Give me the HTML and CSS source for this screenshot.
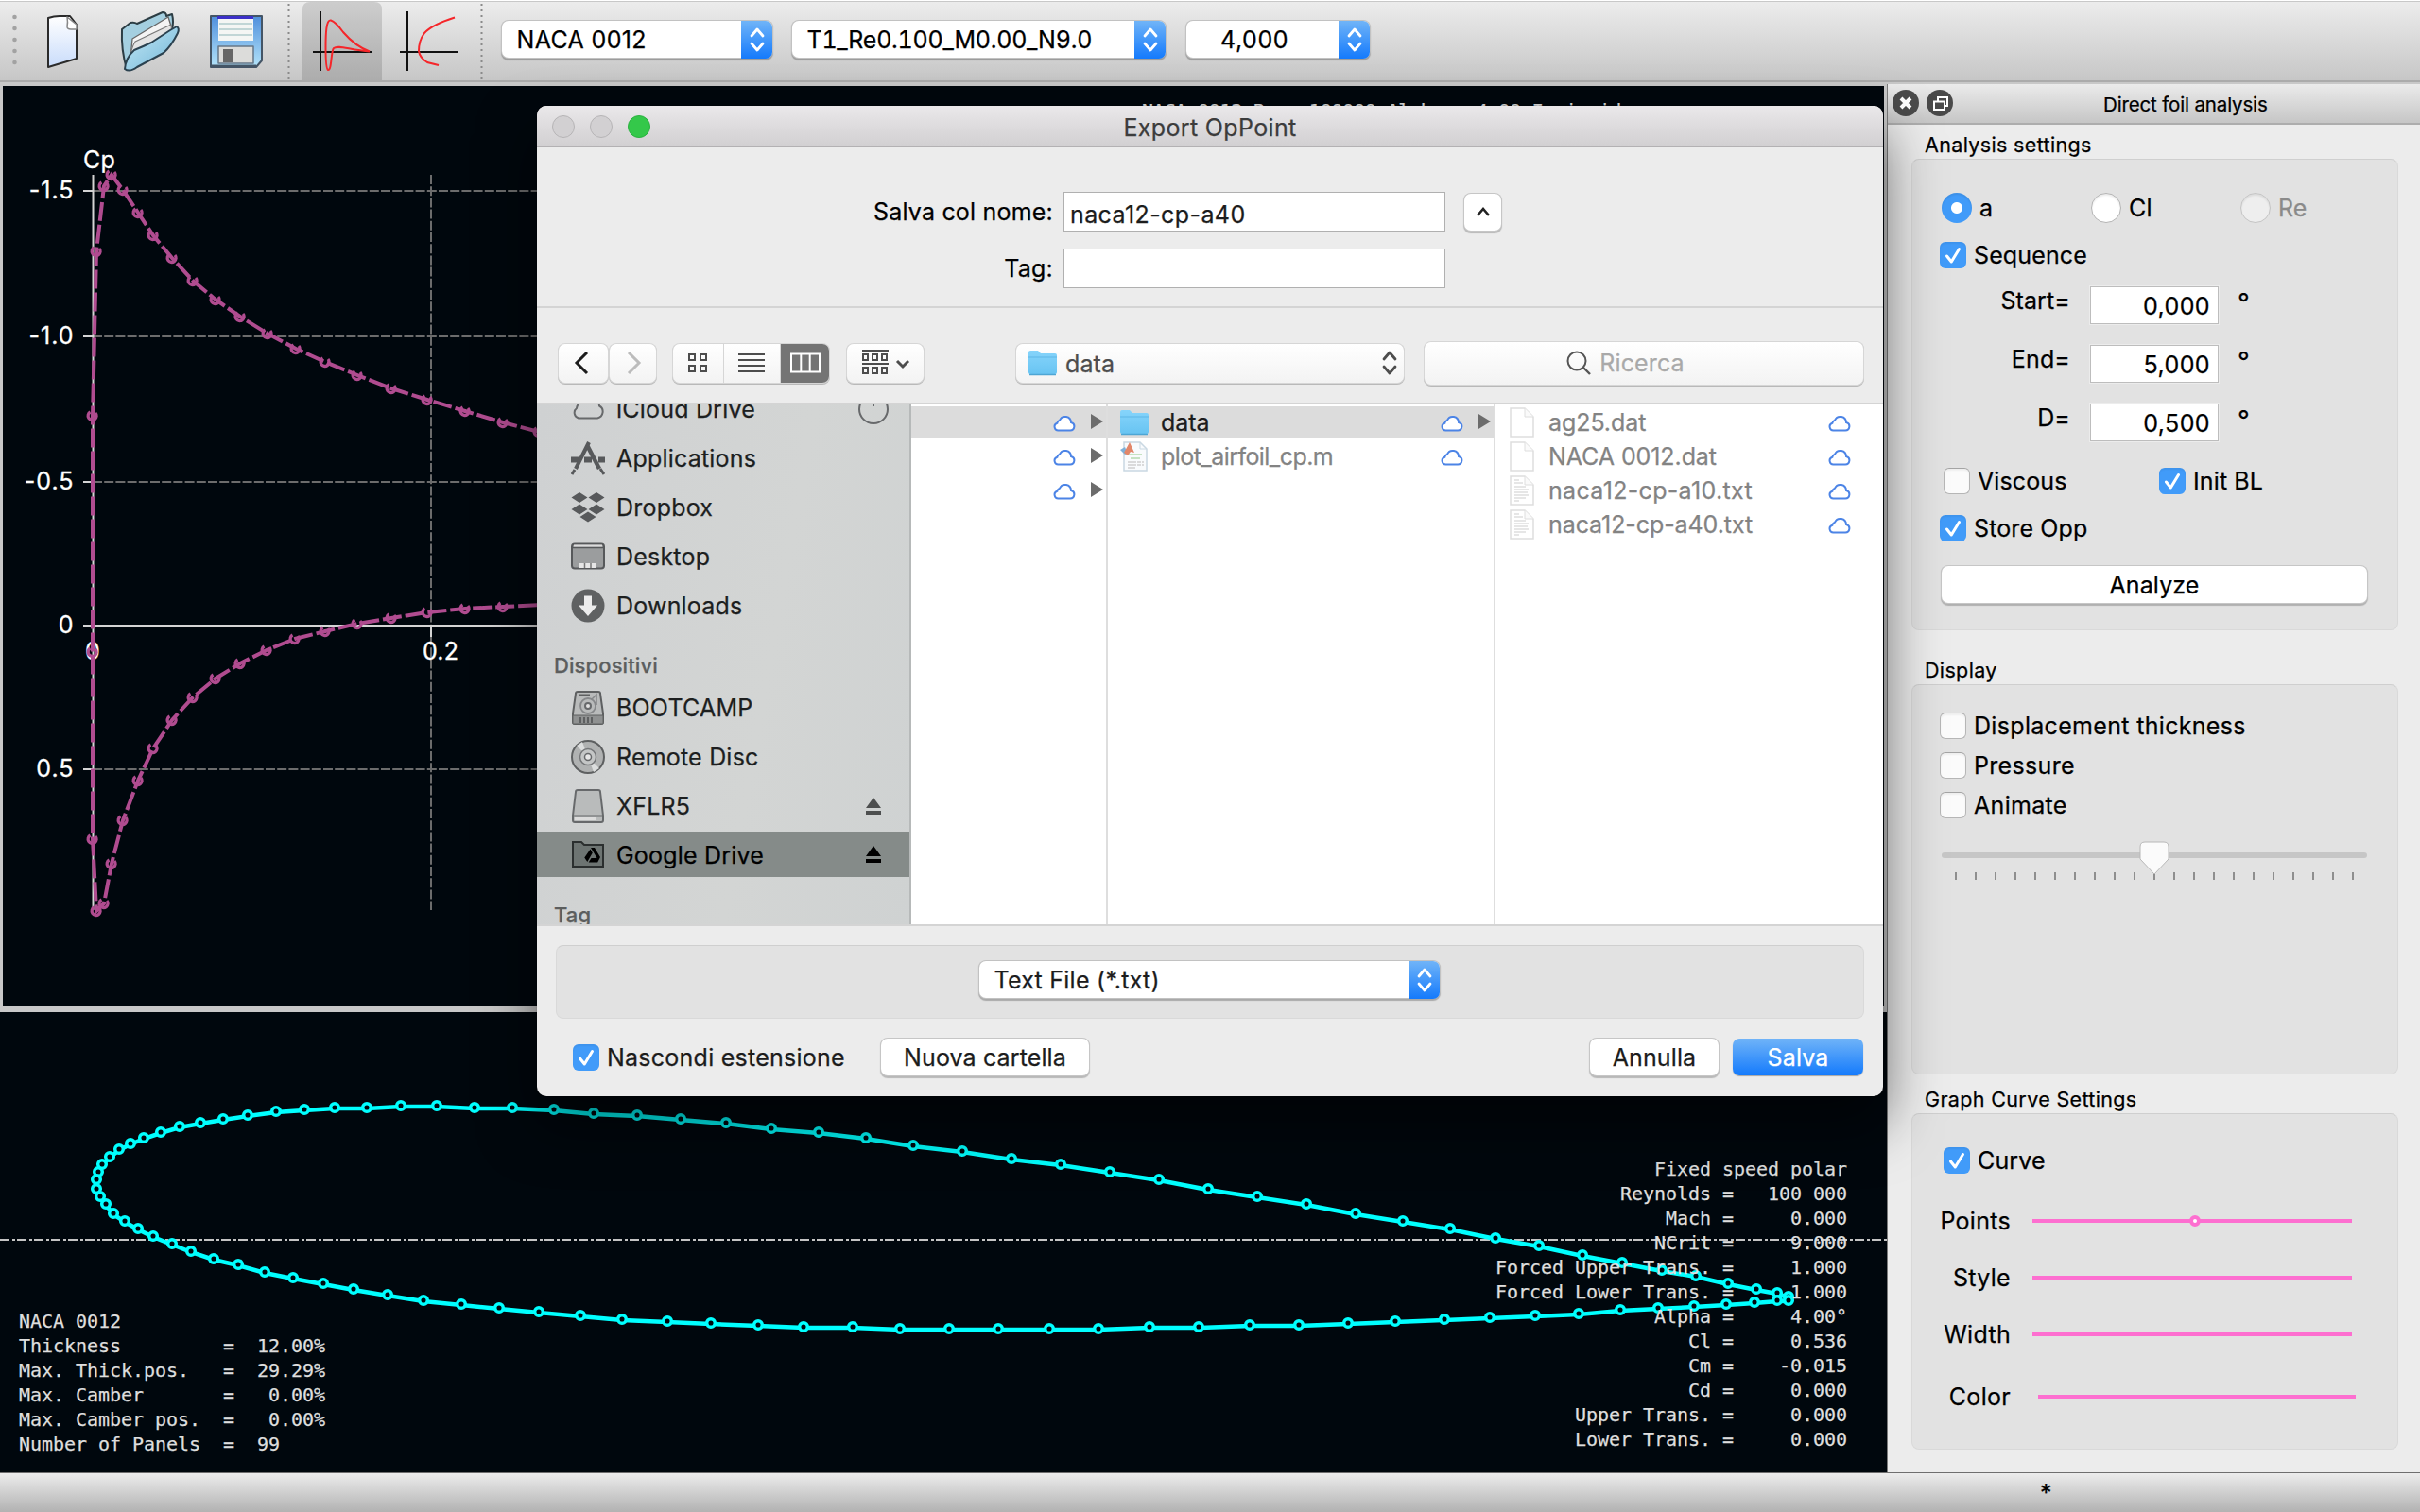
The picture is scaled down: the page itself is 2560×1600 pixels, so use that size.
FILE: index.html
```html
<!DOCTYPE html>
<html lang="it">
<head>
<meta charset="utf-8">
<title>Direct foil analysis</title>
<link rel="stylesheet" href="styles.css">
</head>
<body>
<svg class="defs" width="0" height="0">
  <defs>
    <linearGradient id="paper" x1="0" y1="0" x2="0" y2="1"><stop offset="0" stop-color="#fff"/><stop offset="1" stop-color="#c9dcfb"/></linearGradient>
    <linearGradient id="folderg" x1="0" y1="0" x2="0" y2="1"><stop offset="0" stop-color="#86d4fb"/><stop offset="1" stop-color="#68c4f2"/></linearGradient>
    <linearGradient id="teal" x1="0" y1="0" x2="1" y2="1"><stop offset="0" stop-color="#c6eaf6"/><stop offset="1" stop-color="#72b6d8"/></linearGradient>
    <linearGradient id="disk" x1="0" y1="0" x2="0" y2="1"><stop offset="0" stop-color="#4f8fdc"/><stop offset="1" stop-color="#b4e4fa"/></linearGradient>
    <symbol id="cloud" viewBox="0 0 24 20"><path d="M6 18.500h12a4.300 4.300 0 0 0 1-8.500A6.300 6.300 0 0 0 7 7.600a4 4 0 0 0-2.600 3.100A4 4 0 0 0 6 18.500z" fill="#fff" stroke="#4c84e6" stroke-width="2"/></symbol>
    <symbol id="folder" viewBox="0 0 32 28"><path d="M1 3q0-2 2-2h8l3 3h15q2 0 2 2v18q0 2-2 2H3q-2 0-2-2z" fill="url(#folderg)"/><path d="M1 8h30" stroke="#5fb7e6" stroke-width="1"/><path d="M2 26.500h28" stroke="#4ea6d4" stroke-width="1.500"/></symbol>
    <symbol id="doc" viewBox="0 0 26 32"><path d="M1 1h15l9 9v21H1z" fill="#fff" stroke="#dedede" stroke-width="1.500"/><path d="M16 1v9h9" fill="#fafafa" stroke="#dedede"/></symbol>
    <symbol id="txt" viewBox="0 0 26 32"><use href="#doc"/><path d="M5 5h5M5 8h9M5 12h12M5 15h15M5 18h14M5 21h15M5 24h12M5 27h5" stroke="#dedede" stroke-width="1.300"/></symbol>
    <symbol id="tick" viewBox="0 0 28 28"><path d="M7.500 15l4.800 6L20.500 7.500" fill="none" stroke="#fff" stroke-width="3" stroke-linecap="round" stroke-linejoin="round"/></symbol>
    <symbol id="updown" viewBox="0 0 20 28"><path d="M4 10l6-7 6 7M4 18l6 7 6-7" fill="none" stroke="currentColor" stroke-width="2.800" stroke-linecap="round" stroke-linejoin="round"/></symbol>
    <symbol id="eject" viewBox="0 0 18 20"><path d="M9 1l8 11H1zM1 15h16v4H1z" fill="currentColor"/></symbol>
  </defs>
</svg>

<header class="toolbar">
  <svg class="tools" width="530" height="86" viewBox="0 0 530 86">
    <g fill="#a2a2a2"><circle cx="15.500" cy="18" r="2.300"/><circle cx="15.500" cy="30" r="2.300"/><circle cx="15.500" cy="42" r="2.300"/><circle cx="15.500" cy="54" r="2.300"/><circle cx="15.500" cy="66" r="2.300"/></g>
    <g stroke-linejoin="round">
      <path d="M51 19q6-2 12-2h11l7 9v36L51 71z" fill="url(#paper)" stroke="#2a2a2a" stroke-width="2"/>
      <path d="M71 18q1 6 0 10 0 3 4 3h6v-5z" fill="#fff" stroke="#888" stroke-width="1.500"/>
      <path d="M129 31l9-7q4-1 7 1l27-12q4 0 4 4l6-2q2 8 0 16L140 73h-6q-6-20-5-42z" fill="#a4cfe0" stroke="#2c3d44" stroke-width="2"/>
      <path d="M140 41l38-23 5 16-46 38z" fill="#f4f4f4" stroke="#666" stroke-width="1.300"/>
      <path d="M137 64q2-14 6-20l38-18 1 10-44 32z" fill="#e4e4e4" stroke="#777" stroke-width="1.200"/>
      <path d="M132 73q1-12 10-20 10-4 18-8l20-13 7-4q3 2 1 7-7 14-15 21l-28 15q-8 6-13 2z" fill="url(#teal)" stroke="#2b4250" stroke-width="2"/>
      <path d="M223 17h54v47l-6 7h-48z" fill="url(#disk)" stroke="#445566" stroke-width="2"/>
      <path d="M223 70h48" stroke="#445566" stroke-width="3"/>
      <path d="M231 19h37v24h-37z" fill="#f4f6f4"/><path d="M230 17h38v3h-38z" fill="#3c30c8"/>
      <path d="M232 25h35M232 31h35M232 37h35" stroke="#b0cccc" stroke-width="1.500"/>
      <path d="M231 49h37v18h-37z" fill="#dcdcda" stroke="#678" stroke-width="1.500"/><path d="M236 52h10v14h-10z" fill="#666"/>
    </g>
    <path d="M305.500 4v82M509.500 4v82" stroke="#8a8a8a" stroke-width="2" stroke-dasharray="2 4"/>
    <path d="M320 86V10q0-8 8-8h68q8 0 8 8v76z" fill="#000" fill-opacity=".13"/>
    <path d="M339 12v63M331 55h62M431 12v63M423 55h62" stroke="#111" stroke-width="2"/>
    <g fill="none" stroke="#f5262a" stroke-width="2">
      <path d="M391 54.500Q376 49 363 34Q355 23 350 21.500C345 20 344.500 36 344.500 50C344.500 64 345 73 347 74C351 75 350 54 353 51C358 47 370 53 391 54.500"/>
      <path d="M481 18.500Q457 26 449 35Q443 43 443 54Q444 61 452 66L464 69"/>
    </g>
  </svg>
  <div class="combo c1"><span>NACA 0012</span><i><svg width="20" height="28"><use href="#updown"/></svg></i></div>
  <div class="combo c2"><span>T1_Re0.100_M0.00_N9.0</span><i><svg width="20" height="28"><use href="#updown"/></svg></i></div>
  <div class="combo c3"><span>4,000</span><i><svg width="20" height="28"><use href="#updown"/></svg></i></div>
</header>

<main class="main">
  <section class="views">
    <div class="graph">
      <pre class="mono runinfo">NACA 0012 Re = 100000 Alpha = 4.00 Inviscid</pre>
      <svg width="1990" height="974" viewBox="3 91 1990 974">
        <defs>
          <marker id="pm" markerUnits="userSpaceOnUse" markerWidth="16" markerHeight="16" refX="8" refY="8"><path d="M5.500 4A4.500 4.500 0 1 0 11 5" fill="none" stroke="#b04c90" stroke-width="3.300"/></marker>
        </defs>
        <path d="M98 202H700M98 356H700M98 510H700M98 814H700M456 185V963" stroke="#6c6c6c" stroke-width="2" stroke-dasharray="10 2.200"/>
        <path d="M98.500 185V963M88 662H700M88 202h10M88 356h10M88 510h10M88 814h10M456 662v12" stroke="#d4d4d4" stroke-width="2" fill="none"/>
        <g class="axis"><text x="88" y="178">Cp</text>
          <g class="ylab" text-anchor="end"><text x="78.500" y="210">-1.5</text><text x="78.500" y="364">-1.0</text><text x="78.500" y="518">-0.5</text><text x="78.500" y="670">0</text><text x="78.500" y="822">0.5</text></g>
          <text x="90" y="698">0</text><text x="447" y="698">0.2</text></g>
        <polyline class="cp" points="570,457 532,447 492,435 452,423 414,411 378,397 344,383 313,369 283,353 254,335 228,317 204,297 182,273 162,249 146,225 130,201 118,185 110,197 102,266 98,440 98,690 98,888 102,964 110,956 118,914 130,868 146,826 162,792 182,762 204,738 228,718 254,702 282,688 312,676 344,668 378,660 414,654 452,648 492,644 532,642 572,640"/>
      </svg>
    </div>
    <div class="splitter"></div>
    <div class="foil">
      <pre class="mono foilinfo">NACA 0012
Thickness         =  12.00%
Max. Thick.pos.   =  29.29%
Max. Camber       =   0.00%
Max. Camber pos.  =   0.00%
Number of Panels  =  99</pre>
      <pre class="mono polarinfo">Fixed speed polar
Reynolds =   100 000
Mach =     0.000
NCrit =     9.000
Forced Upper Trans. =     1.000
Forced Lower Trans. =     1.000
Alpha =     4.00°
Cl =     0.536
Cm =    -0.015
Cd =     0.000
Upper Trans. =     0.000
Lower Trans. =     0.000</pre>
      <svg width="1996" height="487" viewBox="0 1071 1996 487">
        <defs>
          <marker id="cm" markerUnits="userSpaceOnUse" markerWidth="18" markerHeight="18" refX="9" refY="10"><circle cx="9" cy="9" r="4.300" fill="#00070d" stroke="#0ff" stroke-width="3.500"/></marker>
        </defs>
        <path d="M0 1312H1996" stroke="#c4c4c4" stroke-width="2" stroke-dasharray="10 3 3 2"/>
        <polyline class="airfoil" transform="translate(0 1)" points="1892,1372 1880,1368 1858,1364 1828,1358 1794,1350 1758,1344 1716,1336 1674,1328 1628,1318 1582,1310 1534,1300 1484,1292 1434,1284 1382,1274 1330,1266 1278,1258 1226,1248 1174,1240 1122,1232 1070,1226 1018,1218 966,1212 916,1204 866,1198 816,1194 768,1188 720,1184 674,1180 628,1178 586,1174 542,1172 502,1172 462,1170 424,1170 388,1172 354,1172 322,1174 292,1176 262,1180 236,1184 212,1188 190,1192 170,1198 152,1204 138,1210 126,1216 116,1224 108,1232 104,1240 102,1248 102,1258 106,1266 112,1274 120,1284 132,1292 146,1300 162,1308 182,1316 202,1324 226,1332 252,1338 280,1346 310,1352 342,1358 374,1364 410,1370 448,1376 488,1380 528,1384 570,1388 614,1392 658,1396 706,1398 752,1400 802,1402 850,1404 902,1404 952,1406 1004,1406 1056,1406 1110,1406 1162,1406 1216,1404 1268,1404 1322,1402 1374,1402 1426,1400 1476,1398 1528,1396 1576,1394 1624,1392 1670,1390 1714,1386 1754,1384 1792,1382 1826,1380 1856,1378 1880,1376 1892,1376"/>
      </svg>
    </div>
  </section>

  <aside class="dock">
    <div class="docktitle">
      <svg width="70" height="32" viewBox="0 0 70 32"><circle cx="19" cy="16" r="14" fill="#4a4a4a"/><path d="M14 11l10 10M24 11L14 21" stroke="#fff" stroke-width="4"/><circle cx="55" cy="16" r="14" fill="#4a4a4a"/><path d="M53 14v-4h10v9h-3M49 14.500h11V23H49z" fill="none" stroke="#fff" stroke-width="2"/></svg>
      <span>Direct foil analysis</span>
    </div>
    <h2 class="glabel first">Analysis settings</h2>
    <div class="gbox analysis">
      <div class="radios">
        <label><b class="radio on"></b>a</label><label><b class="radio"></b>Cl</label><label class="dim"><b class="radio"></b>Re</label>
      </div>
      <label class="check seq"><b class="cb on"><svg><use href="#tick"/></svg></b>Sequence</label>
      <div class="field"><span>Start=</span><div class="num">0,000</div><em>°</em></div>
      <div class="field"><span>End=</span><div class="num">5,000</div><em>°</em></div>
      <div class="field"><span>D=</span><div class="num">0,500</div><em>°</em></div>
      <div class="pair"><label class="check"><b class="cb"></b>Viscous</label><label class="check"><b class="cb on"><svg><use href="#tick"/></svg></b>Init BL</label></div>
      <label class="check store"><b class="cb on"><svg><use href="#tick"/></svg></b>Store Opp</label>
      <div class="btn analyze">Analyze</div>
    </div>
    <h2 class="glabel">Display</h2>
    <div class="gbox display">
      <label class="check"><b class="cb"></b>Displacement thickness</label>
      <label class="check"><b class="cb"></b>Pressure</label>
      <label class="check"><b class="cb"></b>Animate</label>
      <svg class="slider" width="454" height="70" viewBox="2052 873 454 70">
        <rect x="2054" y="902" width="450" height="6" rx="3" fill="#c6c6c6"/>
        <path d="M2068 927H2490" stroke="#8e8e8e" stroke-width="8" stroke-dasharray="2 19"/>
        <path d="M2264 896q0-5 5-5h20q5 0 5 5v13l-15 16-15-16z" fill="#fbfbfb" stroke="#b8b8b8" stroke-width="1"/>
      </svg>
    </div>
    <h2 class="glabel third">Graph Curve Settings</h2>
    <div class="gbox curve">
      <label class="check"><b class="cb on"><svg><use href="#tick"/></svg></b>Curve</label>
      <div class="crow"><span>Points</span><i><u></u></i></div>
      <div class="crow"><span>Style</span><i></i></div>
      <div class="crow"><span>Width</span><i></i></div>
      <div class="crow color"><span>Color</span><i></i></div>
    </div>
  </aside>
</main>

<footer class="status"><span>*</span></footer>

<div class="dialog">
  <div class="dtitle"><div class="lights"><b></b><b></b><b class="green"></b></div><span>Export OpPoint</span></div>
  <div class="names">
    <div class="nrow"><span>Salva col nome:</span><div class="inp">naca12-cp-a40</div><div class="btn up"><svg width="16" height="12" viewBox="0 0 16 12"><path d="M2 10l6-7 6 7" fill="none" stroke="#222" stroke-width="2.600"/></svg></div></div>
    <div class="nrow"><span>Tag:</span><div class="inp"></div></div>
  </div>
  <div class="nav">
    <div class="nb back"><svg width="20" height="26" viewBox="0 0 20 26"><path d="M14 2L3 13l11 11" fill="none" stroke="#1c1c1c" stroke-width="3"/></svg></div>
    <div class="nb fwd"><svg width="20" height="26" viewBox="0 0 20 26"><path d="M5 2l11 11L5 24" fill="none" stroke="#bcbcbc" stroke-width="3"/></svg></div>
    <div class="seg">
      <div><svg width="24" height="24" viewBox="0 0 24 24" fill="none" stroke="#4d4d4d" stroke-width="2"><path d="M2 3h6v6H2zM14 3h6v6h-6zM2 15h6v6H2zM14 15h6v6h-6z"/></svg></div>
      <div><svg width="30" height="24" viewBox="0 0 30 24"><path d="M0 3h28M0 9h28M0 15h28M0 21h28" stroke="#4d4d4d" stroke-width="2"/></svg></div>
      <div class="on"><svg width="34" height="24" viewBox="0 0 34 24"><path d="M2 2.500h30v19H2z" fill="none" stroke="#fff" stroke-width="2"/><path d="M12.300 3v18M21.700 3v18" stroke="#fff" stroke-width="2"/></svg></div>
    </div>
    <div class="nb group"><svg width="52" height="30" viewBox="0 0 52 30" fill="none" stroke="#4d4d4d" stroke-width="2"><path d="M1 2h28M1 16h28M2 6h5v6H2zM12 6h5v6h-5zM22 6h5v6h-5zM2 20h5v6H2zM12 20h5v6h-5zM22 20h5v6h-5z"/><path d="M38 13l6 6 6-6" stroke-width="3"/></svg></div>
    <div class="nb path"><svg width="32" height="28"><use href="#folder"/></svg><span>data</span><svg class="ud" width="20" height="28"><use href="#updown"/></svg></div>
    <div class="nb search"><svg width="28" height="28" viewBox="0 0 28 28"><circle cx="12" cy="12" r="9.500" fill="none" stroke="#555" stroke-width="2"/><path d="M18.500 18.500L26 26" stroke="#555" stroke-width="2.400"/></svg><span>Ricerca</span></div>
  </div>
  <div class="browser">
    <div class="side">
      <div class="srow"><svg viewBox="0 0 36 36"><path d="M8 27.500h20a7 7 0 0 0 2-13A10 10 0 0 0 11 11a7 7 0 0 0-5 6A6 6 0 0 0 8 27.500z" fill="none" stroke="#67696b" stroke-width="2"/></svg><span>iCloud Drive</span><svg class="pie" width="34" height="34" viewBox="0 0 34 34"><circle cx="17" cy="17" r="15" fill="none" stroke="#67696b" stroke-width="2"/><path d="M17 2v12" stroke="#67696b" stroke-width="2"/></svg></div>
      <div class="srow"><svg viewBox="0 0 36 36"><g stroke="#57595b" fill="none"><path d="M0 19.500h8M14 19.500h8M29 19.500h7" stroke-width="6"/><path d="M19 1L5 29" stroke-width="4"/><path d="M17 4l13 25" stroke-width="4.500"/><path d="M4 30l-3 5M31 29l4 6" stroke-width="3"/></g></svg><span>Applications</span></div>
      <div class="srow"><svg viewBox="0 0 36 36"><path fill="#57595b" d="M9 2l8.500 5.500L9 13 .500 7.500zM27 2l8.500 5.500L27 13l-8.500-5.500zM9 14.500l8.500 5.500L9 25.500.500 20zM27 14.500l8.500 5.500-8.500 5.500-8.500-5.500zM18 22.500l8.500 5.500-8.500 5.500L9.500 28z"/></svg><span>Dropbox</span></div>
      <div class="srow"><svg viewBox="0 0 36 36"><rect x="1" y="4.500" width="34" height="26" rx="3" fill="#9b9d9e" stroke="#57595b" stroke-width="2"/><path d="M2 8.500h32" stroke="#57595b" stroke-width="1.500"/><path d="M3 6.500h30" stroke="#dcdcdc" stroke-width="2"/><path d="M9 25h18v5H9z" fill="#e6e6e6"/><path d="M14.500 25v5M21 25v5" stroke="#777" stroke-width="1.500"/></svg><span>Desktop</span></div>
      <div class="srow"><svg viewBox="0 0 36 36"><circle cx="18" cy="18" r="17.500" fill="#5f6162"/><path d="M14 7.500h8v10h6L18 29 8 17.500h6z" fill="#ececec"/></svg><span>Downloads</span></div>
      <div class="shead">Dispositivi</div>
      <div class="srow"><svg viewBox="0 0 36 36"><path d="M5 3q0-2 2-2h22q2 0 2 2l3 21v9q0 2-2 2H4q-2 0-2-2v-9z" fill="#b9bbbb" stroke="#5e6061" stroke-width="2"/><path d="M2 26h32v9H2z" fill="#8f9191" stroke="#5e6061"/><circle cx="18" cy="16" r="8" fill="none" stroke="#86888a" stroke-width="1.800"/><circle cx="18" cy="16" r="3" fill="#e2e2e2" stroke="#67696b" stroke-width="2"/><path d="M9 4.500h11M10 28v6M14 28v6M18 28v6M22 28v6" stroke="#5e6061" stroke-width="2"/><path d="M22 9l5-5v11" fill="none" stroke="#86888a" stroke-width="1.500"/></svg><span>BOOTCAMP</span></div>
      <div class="srow"><svg viewBox="0 0 36 36"><circle cx="18" cy="18" r="17" fill="#b0b2b2" stroke="#5e6061" stroke-width="2"/><path d="M18 18L6 6l6-4zM18 18l12 12-6 4z" fill="#dcdede"/><circle cx="18" cy="18" r="8.500" fill="#c4c6c6" stroke="#747678" stroke-width="1.500"/><circle cx="18" cy="18" r="3.500" fill="#e6e6e6" stroke="#67696b" stroke-width="1.500"/></svg><span>Remote Disc</span></div>
      <div class="srow"><svg viewBox="0 0 36 36"><path d="M5 3q0-2 2-2h22q2 0 2 2l3 25v5q0 2-2 2H4q-2 0-2-2v-5z" fill="#b9bbbb" stroke="#67696b" stroke-width="2"/><path d="M2.500 28.500h31" stroke="#67696b" stroke-width="2"/><path d="M4 31.500h22" stroke="#dcdcdc" stroke-width="3"/></svg><span>XFLR5</span><svg class="ej" width="18" height="20"><use href="#eject"/></svg></div>
      <div class="srow sel"><svg viewBox="0 0 36 36"><path d="M2 5h9l3 3h20v23H2z" fill="#6d7472" stroke="#2b2f2f" stroke-width="2"/><path d="M21 11h4l6 10-2 3.500zM20.500 12.500l2.300 4-5.500 9.500-3-4.500zM21.500 22h9l-2.300 4.500h-9.500z" fill="#000"/></svg><span>Google Drive</span><svg class="ej" width="18" height="20"><use href="#eject"/></svg></div>
      <div class="shead">Tag</div>
    </div>
    <div class="col col1">
      <div class="frow sel"><svg class="cl"><use href="#cloud"/></svg><s></s></div>
      <div class="frow"><svg class="cl"><use href="#cloud"/></svg><s></s></div>
      <div class="frow"><svg class="cl"><use href="#cloud"/></svg><s></s></div>
    </div>
    <div class="col col2">
      <div class="frow sel"><svg class="ic" width="32" height="28"><use href="#folder"/></svg><span>data</span><svg class="cl"><use href="#cloud"/></svg><s></s></div>
      <div class="frow"><svg class="ic" width="32" height="32" viewBox="0 0 32 32"><path d="M5 1h17l7 7v23H5z" fill="#f9fbfd" stroke="#c9d8e2" stroke-width="1.500"/><path d="M22 1v7h7" fill="none" stroke="#c9d8e2"/><path d="M9 14h15M12 18h10" stroke="#b5dcb0" stroke-width="1.500"/><path d="M9 22h17M9 25h17M9 28h8" stroke="#cfcfcf" stroke-width="1.500" stroke-dasharray="4 1"/><path d="M1 9l5-3 3 7-3 1z" fill="#7fb0d8"/><path d="M5 12L11 1l5 11-4-1-3 4z" fill="#e2876a"/></svg><span class="tight">plot_airfoil_cp.m</span><svg class="cl"><use href="#cloud"/></svg><s class="none"></s></div>
    </div>
    <div class="col col3">
      <div class="frow"><svg class="ic" width="26" height="32"><use href="#doc"/></svg><span>ag25.dat</span><svg class="cl"><use href="#cloud"/></svg></div>
      <div class="frow"><svg class="ic" width="26" height="32"><use href="#doc"/></svg><span>NACA 0012.dat</span><svg class="cl"><use href="#cloud"/></svg></div>
      <div class="frow"><svg class="ic" width="26" height="32"><use href="#txt"/></svg><span class="loose">naca12-cp-a10.txt</span><svg class="cl"><use href="#cloud"/></svg></div>
      <div class="frow"><svg class="ic" width="26" height="32"><use href="#txt"/></svg><span>naca12-cp-a40.txt</span><svg class="cl"><use href="#cloud"/></svg></div>
    </div>
  </div>
  <div class="format"><div class="combo c4"><span>Text File (*.txt)</span><i><svg width="20" height="28"><use href="#updown"/></svg></i></div></div>
  <div class="actions">
    <label class="check"><b class="cb on"><svg><use href="#tick"/></svg></b>Nascondi estensione</label>
    <div class="btn newf">Nuova cartella</div>
    <div class="btn cancel">Annulla</div>
    <div class="btn save">Salva</div>
  </div>
</div>
</body>
</html>
```
FILE: styles.css
```css
* { box-sizing: border-box; }
body { margin: 0; width: 2560px; height: 1600px; overflow: hidden; display: flex; flex-direction: column; position: relative; background: #c8c8c8; color: #000; font: 25px/30px Inter, "Liberation Sans", sans-serif; letter-spacing: 0.120px; -webkit-text-stroke: 0.250px currentColor; }
.defs { position: absolute; }
svg { display: block; flex: none; }
i, em, s, u, b { font-style: normal; text-decoration: none; display: block; }

.toolbar { height: 88px; flex: none; display: flex; align-items: flex-start; background: linear-gradient(#ececec, #c6c6c6) 0 1px / 100% 84px no-repeat, #c8c8c8; border-top: 1px solid #fff; position: relative; }
.toolbar::after { content: ""; position: absolute; left: 0; right: 0; top: 84px; height: 2px; background: #ababab; }
.tools { margin-top: -1px; }
.combo { height: 39px; margin-top: 21px; display: flex; align-items: center; justify-content: space-between; background: #fff; border-radius: 7px; box-shadow: 0 0 0 1px #c2c2c2, 0 1.500px 1px 1px rgba(0,0,0,.25); padding-left: 15.500px; }
.combo i { width: 33px; height: 40px; border-radius: 0 7px 7px 0; background: linear-gradient(#70b4f8, #147afc); color: #fff; display: flex; align-items: center; justify-content: center; }
.c1 { width: 286px; margin-left: 1px; }
.c1 span { letter-spacing: 0.350px; }
.c2 { width: 395px; margin-left: 21px; }
.c2 span { font-variant-numeric: tabular-nums; letter-spacing: -0.250px; }
.c3 { width: 194px; margin-left: 22px; padding-left: 36px; }
.c3 span { letter-spacing: 0.600px; }

.main { flex: none; height: 1471px; display: flex; }
.views { width: 1996px; height: 1470px; display: flex; flex-direction: column; }
.graph { margin: 3px 3px 0; height: 974px; background: #00070d; position: relative; }
.splitter { height: 6px; background: #c8c8c8; }
.foil { height: 487px; background: #00070d; position: relative; }
.axis text { fill: #fff; stroke: #fff; stroke-width: 0.300px; font-size: 25px; letter-spacing: 0.200px; }
.axis .ylab text { letter-spacing: 1px; }
.cp { fill: none; stroke: #b04c90; stroke-width: 4; stroke-dasharray: 20 4; marker-start: url(#pm); marker-mid: url(#pm); }
.airfoil { fill: none; stroke: #0ff; stroke-width: 4.500; marker-start: url(#cm); marker-mid: url(#cm); marker-end: url(#cm); }
.mono { margin: 0; font: 20px/26px "DejaVu Sans Mono", monospace; letter-spacing: -0.040px; color: #dedede; position: absolute; }
.runinfo { left: 1205px; top: 13px; letter-spacing: -0.250px; }
.foilinfo { left: 20px; top: 314px; }
.polarinfo { right: 42px; top: 153px; text-align: right; }

.dock { width: 564px; margin-top: 1px; border-left: 1px solid #7c7c7c; background: #ececec; display: flex; flex-direction: column; height: 1469px; }
.docktitle { height: 43px; flex: none; display: flex; align-items: center; background: linear-gradient(#ebebeb, #c6c6c6); border-bottom: 2px solid #adadad; font-size: 20.500px; letter-spacing: -0.150px; padding-bottom: 2px; }
.docktitle span { margin-left: 158px; padding-top: 5px; }
.glabel { margin: 0; flex: none; height: 57px; padding: 0 0 2px 39px; display: flex; align-items: flex-end; font-weight: 400; font-size: 21.500px; line-height: 26px; letter-spacing: 0.350px; }
.glabel.first { height: 36px; }
.glabel.third { height: 41px; }
.gbox { flex: none; margin-left: 25px; width: 515px; background: #e2e2e2; border: 1px solid #d9d9d9; border-top-color: #cfcfcf; border-radius: 8px; padding: 0 29px; }
.analysis { height: 499px; padding-top: 35px; }
.radios { display: flex; height: 32px; }
.radios label { display: flex; align-items: center; gap: 8px; width: 158px; flex: none; padding-left: 2px; }
.radios label:last-child { width: 90px; }
.radio { width: 32px; height: 32px; border-radius: 50%; background: #fff; border: 1px solid #b4b4b4; box-shadow: inset 0 2px 2px rgba(0,0,0,.08); }
.radio.on { background: radial-gradient(circle, #fff 5.500px, #419bf9 6.500px); border: 0; }
.dim { color: #8a8a8a; }
.dim .radio { background: #eee; border-color: #c4c4c4; }
.check { display: flex; align-items: center; gap: 8px; white-space: nowrap; }
.cb { width: 28px; height: 28px; border-radius: 6px; background: #fbfbfb; border: 1px solid #b6b6b6; border-top-color: #a4a4a4; box-shadow: inset 0 2px 2px rgba(0,0,0,.05); flex: none; }
.cb.on { background: #419bf9; border: 0; }
.cb svg { width: 28px; height: 28px; }
.seq { height: 56px; padding-top: 12px; }
.field { display: flex; align-items: center; height: 62px; }
.field span { width: 138px; text-align: right; margin-top: -10px; }
.num { margin-left: 21px; width: 136px; height: 40px; background: #fff; border: 1px solid #bdbdbd; text-align: right; padding: 5px 8px 0 0; box-shadow: 0 0 0 1px #ececec; letter-spacing: 0.400px; }
.field em { margin-left: 20px; margin-top: -4px; font-size: 28px; }
.pair { height: 60px; display: flex; padding-left: 4px; }
.pair .check { width: 228px; flex: none; padding-top: 1px; }
.pair .check:last-child { width: 200px; }
.store { height: 40px; padding-top: 1px; }
.btn { display: flex; align-items: center; justify-content: center; height: 39px; background: #fff; border-radius: 7px; box-shadow: 0 0 0 1px #c6c6c6, 0 1.500px 1px 1px rgba(0,0,0,.22); }
.analyze { margin: 21px 0 0 2px; width: 450px; }
.display { height: 413px; padding-top: 22px; }
.display .check { height: 42px; letter-spacing: 0.320px; }
.curve { height: 356px; padding: 19px 0 0; }
.curve .check { height: 60px; padding-left: 33px; margin-bottom: 4px; }
.crow { height: 60px; display: flex; align-items: center; }
.crow span { width: 104px; text-align: right; letter-spacing: 0.300px; }
.crow i { margin-left: 23px; width: 338px; height: 4px; background: #fd6fd0; display: flex; align-items: center; padding-left: 166px; }
.crow u { width: 12px; height: 12px; border-radius: 50%; border: 4px solid #fd6fd0; background: #fff; }
.crow.color { margin-top: 6px; }
.crow.color i { margin-left: 29px; width: 336px; }

.status { height: 42px; margin-top: -1px; flex: none; background: linear-gradient(#ececec, #b2b2b2); border-top: 1px solid #6e6e6e; padding: 6px 0 0 2158px; font-size: 25px; position: relative; }

.dialog { position: absolute; left: 568px; top: 112px; width: 1424px; height: 1048px; background: #ececec; border-radius: 10px; overflow: hidden; display: flex; flex-direction: column; box-shadow: 0 28px 60px rgba(0,0,0,.58), 0 0 1px rgba(0,0,0,.6); }
.dtitle { height: 44px; flex: none; background: linear-gradient(#eae8ea, #d2d0d2); border-bottom: 2px solid #b3b1b3; display: grid; place-items: center; color: #3c3c3c; letter-spacing: 0.350px; }
.dtitle > * { grid-area: 1 / 1; }
.dtitle span { padding-top: 3px; }
.lights { display: flex; gap: 16px; justify-self: start; margin-left: 16px; padding-top: 2px; }
.lights b { width: 24px; height: 24px; border-radius: 50%; background: #d2d0d2; border: 1px solid #b6b4b6; }
.lights .green { background: #34c84a; border-color: #2bb140; }
.names { height: 170px; flex: none; border-bottom: 2px solid #d4d4d4; padding-top: 47px; display: flex; flex-direction: column; gap: 18px; }
.nrow { display: flex; align-items: center; height: 42px; }
.nrow > span { width: 546px; text-align: right; letter-spacing: 0.200px; }
.inp { margin-left: 11px; width: 404px; height: 42px; background: #fff; border: 1px solid #b0b0b0; padding: 8px 0 0 6px; color: #1c1c1c; letter-spacing: 0.400px; }
.up { margin-left: 20px; width: 39px; }
.nav { height: 100px; flex: none; display: flex; align-items: center; padding: 16px 0 0 23px; }
.nb, .seg { height: 41px; display: flex; align-items: center; border-radius: 7px; background: linear-gradient(#fff, #f3f3f3); box-shadow: 0 0 0 1px #d6d6d6, 0 1px 0 1px #b9b9b9; }
.back { width: 52px; justify-content: center; }
.fwd { width: 49px; margin-left: 2px; justify-content: center; }
.seg { margin-left: 18px; width: 165px; overflow: hidden; }
.seg div { height: 41px; display: flex; align-items: center; justify-content: center; width: 54px; border-right: 1px solid #d6d6d6; }
.seg div:nth-child(2) { width: 60px; }
.seg .on { width: 51px; background: #747474; border: 0; }
.group { margin-left: 19px; width: 81px; justify-content: center; padding-left: 1px; }
.path { margin-left: 98px; width: 410px; padding: 0 5px 0 12px; color: #4d4d4d; }
.path span { margin: 0 auto 0 8px; padding-top: 2px; }
.search { margin-left: 22px; width: 464px; height: 45px; justify-content: center; gap: 8px; padding-right: 40px; color: #a9a9a9; }
.browser { height: 554px; flex: none; display: flex; border-top: 2px solid #d4d4d4; border-bottom: 2px solid #d4d4d4; background: #fff; }
.side { width: 396px; border-right: 2px solid #b6b9b9; background: linear-gradient(100deg, #cfd1d2, #d3d5d4 60%, #cfd2d2); overflow: hidden; color: #1d1f1f; }
.srow { height: 52px; display: flex; align-items: center; padding-left: 36px; color: #4d4f4f; }
.srow:first-child { margin-top: -21px; }
.srow > svg:first-child { width: 36px; height: 36px; }
.srow span { margin-left: 12px; color: #1d1f1f; flex: 1; letter-spacing: 0.200px; }
.pie { margin-right: 21px; }
.ej { margin-right: 29px; }
.srow.sel { height: 48px; margin: 1px 0 3px; background: #858b89; color: #000; }
.srow.sel span { color: #000; padding-top: 1px; }
.shead { height: 56px; padding: 22px 0 0 18px; font-size: 22px; line-height: 30px; font-weight: 500; color: #5c5e5e; letter-spacing: 0.100px; }
.col { padding-top: 2px; border-right: 2px solid #dedede; }
.col1 { width: 208px; }
.col2 { width: 410px; }
.col3 { flex: 1; border: 0; }
.frow { height: 34px; margin-bottom: 2px; display: flex; align-items: center; color: #838383; }
.frow.sel { background: #dcdcdc; color: #1c1c1c; }
.frow span { flex: 1; letter-spacing: -0.080px; }
.frow .tight { letter-spacing: -0.550px; }
.frow .loose { letter-spacing: 0.320px; }
.ic { margin-right: 12px; }
.col2 .frow { padding-left: 12px; }
.col3 .frow { padding-left: 15px; }
.col3 .ic { margin-right: 15px; }
.cl { width: 24px; height: 20px; }
.col1 .cl { margin-left: auto; }
.col3 .cl { margin-right: 34px; }
.frow s { width: 0; height: 0; border: 8px solid transparent; border-left: 13px solid #6c6c6c; border-right: 0; margin: -3px 3px 0 16px; }
.frow s.none { visibility: hidden; }
.format { height: 78px; flex: none; margin: 20px 20px 0; background: #e2e2e2; border: 1px solid #d9d9d9; border-top-color: #cfcfcf; border-radius: 8px; display: flex; padding-left: 447px; }
.c4 { margin-top: 16px; width: 487px; color: #1c1c1c; }
.c4 span { letter-spacing: 0.250px; }
.actions { display: flex; align-items: center; padding: 21px 0 0 38px; color: #1c1c1c; }
.actions .check { width: 326px; letter-spacing: 0.250px; }
.newf { width: 220px; }
.cancel { width: 136px; margin-left: 530px; }
.save { width: 138px; margin-left: 15px; color: #fff; background: linear-gradient(#70b4f8, #147afc); box-shadow: 0 1px 1px rgba(0,0,0,.3); }
```
